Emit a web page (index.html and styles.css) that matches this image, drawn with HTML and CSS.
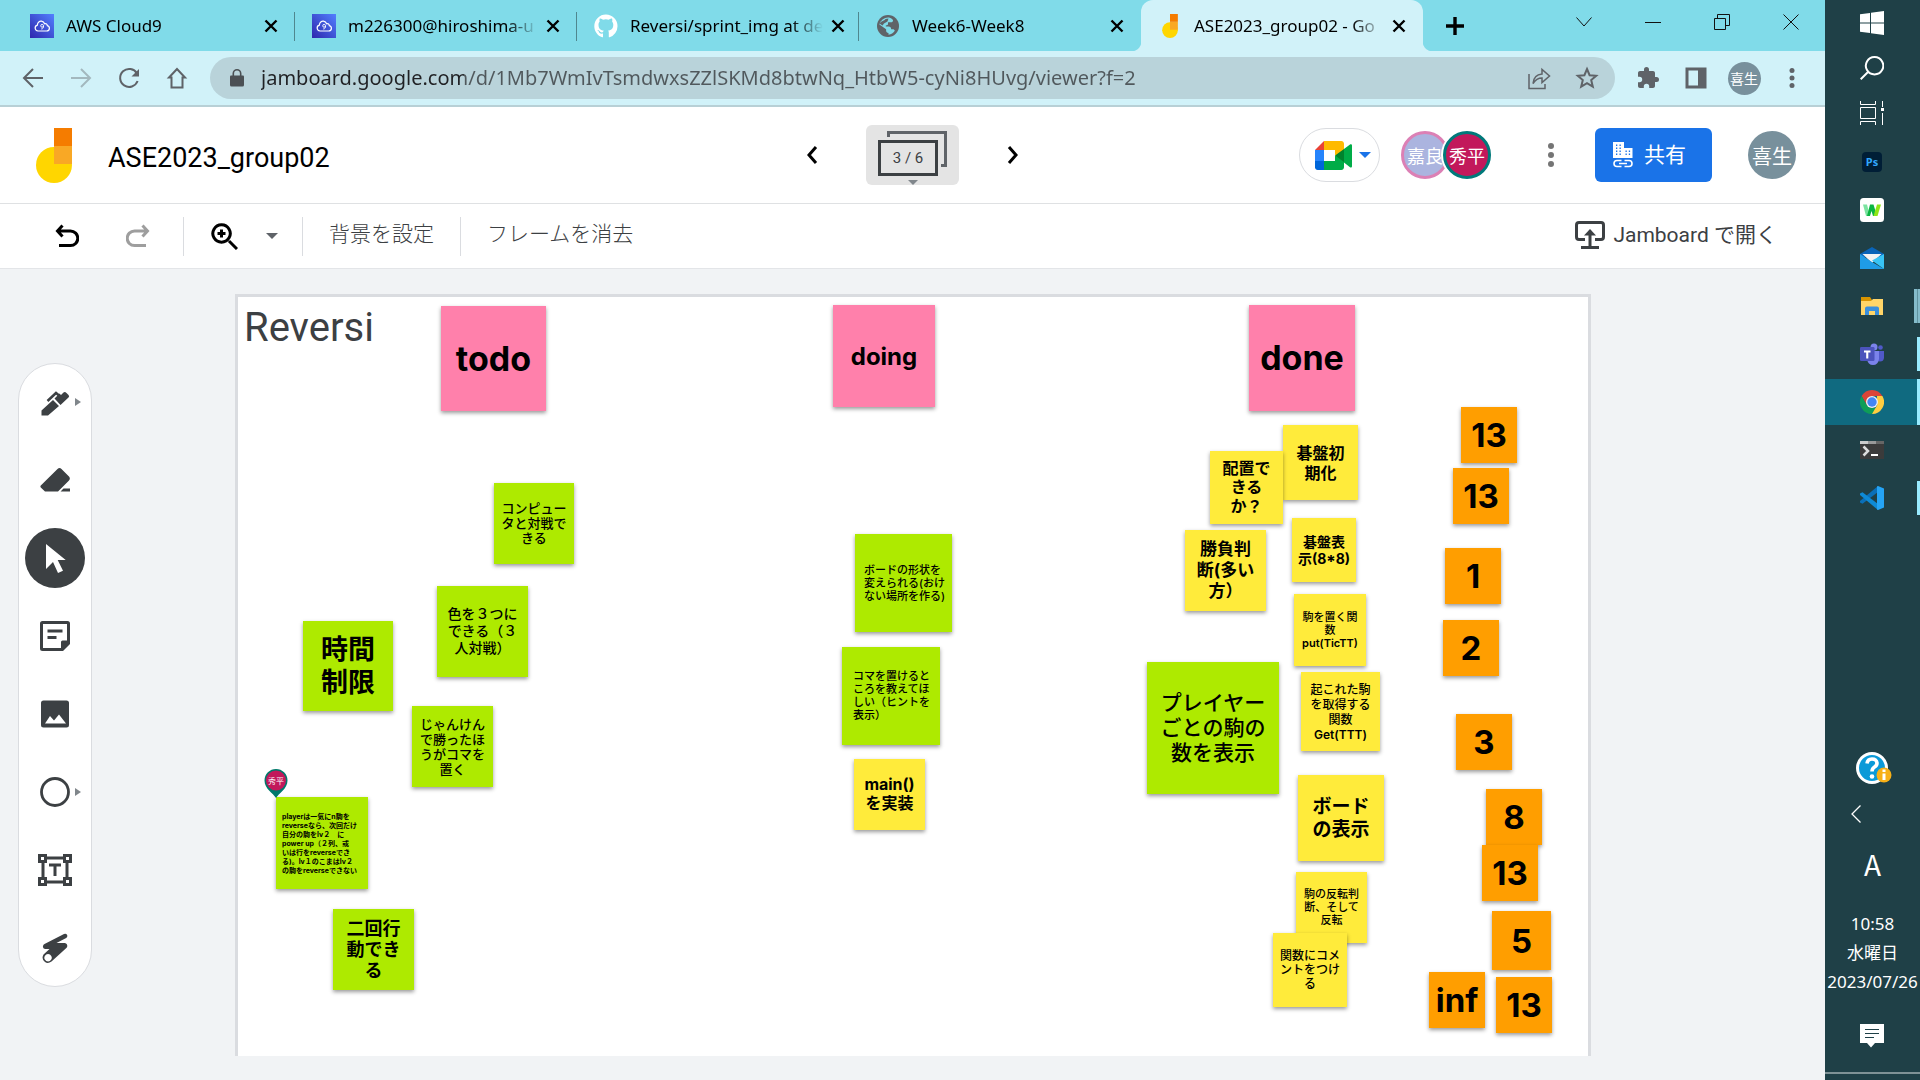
FILE: index.html
```html
<!DOCTYPE html>
<html lang="ja">
<head>
<meta charset="utf-8">
<title>ASE2023_group02 - Google Jamboard</title>
<link rel="stylesheet" href="styles.css">
</head>
<body>
<svg class="defs" aria-hidden="true">
  <defs>
    <linearGradient id="aws" x1="0" y1="1" x2="1" y2="0"><stop offset="0" stop-color="#2e27ad"/><stop offset="1" stop-color="#527fff"/></linearGradient>
    <symbol id="cloud9" viewBox="0 0 24 24"><path fill="url(#aws)" d="M0 0h24v24H0z"/><path fill="none" stroke="#fff" stroke-width="1.2" d="M8 17a3 3 0 0 1-.6-5.900C7.500 8 9.600 7 11.500 7.200c1.800.2 2.700 1.300 3.100 2.500 1.600-.5 2.700.6 2.700 1.900 1.600.4 2.200 1.500 2.100 2.800-.1 1.500-1.300 2.600-2.700 2.600z"/><path fill="none" stroke="#fff" stroke-width=".9" d="M13.500 11.800a1.400 1.400 0 1 1-2.800 0 1.400 1.400 0 0 1 2.800 0c0 2-.3 3.100-2.300 3.200"/></symbol>
    <symbol id="x" viewBox="0 0 14 14"><path fill="none" stroke="#000" stroke-width="2.400" d="M1.500 1.500l11 11M12.500 1.500l-11 11"/></symbol>
    <symbol id="jam" viewBox="0 0 36 55"><path fill="#f57c00" d="M18 0h18v18H18z"/><circle cx="18" cy="37" r="18" fill="#ffd600"/><path fill="#f9a825" d="M18 18h18v18H18z"/></symbol>
    <symbol id="dots" viewBox="0 0 6 24"><circle cx="3" cy="3" r="3"/><circle cx="3" cy="12" r="3"/><circle cx="3" cy="21" r="3"/></symbol>
  </defs>
</svg>
<div class="desktop">
  <div class="browser">
    <div class="tabs">
      <div class="tab"><svg class="fav"><use href="#cloud9"/></svg><span class="tab-title">AWS Cloud9</span><button class="tab-close" aria-label="閉じる"><svg><use href="#x"/></svg></button></div>
      <div class="tab"><svg class="fav"><use href="#cloud9"/></svg><span class="tab-title">m226300@hiroshima-u</span><button class="tab-close" aria-label="閉じる"><svg><use href="#x"/></svg></button></div>
      <div class="tab"><svg class="fav" viewBox="0 0 24 24"><path fill="#fff" d="M12 .5A11.600 11.600 0 0 0 .3 12.200c0 5.100 3.300 9.500 7.900 11.100.6.1.8-.3.800-.6v-3.100c-3.200.7-3.900-1.300-3.900-1.300-.6-1.400-1.300-1.700-1.300-1.700-1-.7.1-.7.1-.7 1.200.1 1.800 1.200 1.800 1.200 1 1.800 2.700 1.300 3.400 1 .1-.8.400-1.300.7-1.600-2.600-.3-5.300-1.300-5.300-5.800 0-1.300.5-2.300 1.200-3.100-.1-.3-.5-1.500.1-3.100 0 0 1-.3 3.200 1.200a11 11 0 0 1 5.800 0c2.200-1.500 3.200-1.200 3.200-1.200.6 1.600.2 2.800.1 3.100.8.800 1.200 1.900 1.200 3.100 0 4.500-2.700 5.500-5.300 5.800.4.4.8 1.100.8 2.200v4c0 .3.200.7.800.6a11.700 11.700 0 0 0 7.900-11.100A11.600 11.600 0 0 0 12 .5z"/></svg><span class="tab-title">Reversi/sprint_img at de</span><button class="tab-close" aria-label="閉じる"><svg><use href="#x"/></svg></button></div>
      <div class="tab last"><svg class="fav" viewBox="0 0 24 24"><circle cx="12" cy="12" r="11" fill="#5f6368"/><path fill="#80dbe9" d="M13 3.500C15 4 16 4.700 17 6c.2 1.500-.8 2.300-2 2.300h-3v1.800c0 1-1 1.300-2.200 1.300v1.200h2.700c1.800 0 2.700 1 2.700 2.700h1.600c1.100 0 1.800.6 2 1.500A8.700 8.700 0 0 1 12.500 20.700V19c-1.500-.2-2.400-1-2.400-2.500v-1.200L3.400 10.500A8.800 8.800 0 0 1 13 3.500z"/><path fill="#5f6368" d="M3.500 9.500C6 6.500 8 7 9.500 5l3-.5-1 3-3.500 2-1.500 2z"/></svg><span class="tab-title">Week6-Week8</span><button class="tab-close" aria-label="閉じる"><svg><use href="#x"/></svg></button></div>
      <div class="tab active"><svg class="fav"><use href="#jam"/></svg><span class="tab-title">ASE2023_group02 - Go</span><button class="tab-close" aria-label="閉じる"><svg><use href="#x"/></svg></button></div>
      <button class="new-tab" aria-label="新しいタブ"><svg viewBox="0 0 18 18"><path stroke="#000" stroke-width="3.400" d="M9 0v18M0 9h18"/></svg></button>
      <div class="window-buttons">
        <button aria-label="タブを検索"><svg viewBox="0 0 16 16"><path d="M.5 3.500L8 12l7.500-8.500"/></svg></button>
        <button aria-label="最小化"><svg viewBox="0 0 16 16"><path d="M0 8.500h16"/></svg></button>
        <button aria-label="元に戻す"><svg viewBox="0 0 16 16"><path d="M.5 4.500h11v11H.5zM3.500 4.500v-4h12v11h-4"/></svg></button>
        <button aria-label="閉じる"><svg viewBox="0 0 16 16"><path d="M.5.5l15 15M15.500.5l-15 15"/></svg></button>
      </div>
    </div>

    <div class="navbar">
      <button class="nav" aria-label="戻る"><svg viewBox="0 0 24 24"><path d="M22 12H3M12 3l-9 9 9 9"/></svg></button>
      <button class="nav faded" aria-label="進む"><svg viewBox="0 0 24 24"><path d="M2 12h19M12 3l9 9-9 9"/></svg></button>
      <button class="nav" aria-label="再読み込み"><svg viewBox="0 0 24 24"><path d="M20 7.500A9 9 0 1 0 20.600 15"/><path d="M14.500 10.500H22V3z" fill="#5f6368" stroke="none"/></svg></button>
      <button class="nav" aria-label="ホーム"><svg viewBox="0 0 24 24"><path d="M12 3L4 11.500h2.500V21.500h11V11.500H20z"/></svg></button>
      <div class="omnibox">
        <svg class="lock" viewBox="0 0 14 18"><path fill="#4b5054" d="M1 6.500h12q1 0 1 1V16q0 1.500-1.500 1.500h-11Q0 17.500 0 16V7.500q0-1 1-1z"/><path fill="none" stroke="#4b5054" stroke-width="1.600" d="M3.300 7V4.500a3.700 3.700 0 0 1 7.400 0V7"/></svg>
        <label class="url"><input type="text" aria-label="アドレス" value="jamboard.google.com/d/1Mb7WmIvTsmdwxsZZlSKMd8btwNq_HtbW5-cyNi8HUvg/viewer?f=2"></label>
        <button class="nav" aria-label="共有"><svg viewBox="0 0 24 24"><path class="thin" d="M2 8v14.500h16V18M6 17.500c.5-6 3.500-9 9-9.500V3.500l7.500 6.500-7.500 6.500V12c-4 0-6.500 1.500-9 5.500z"/></svg></button>
        <button class="nav" aria-label="ブックマーク"><svg viewBox="0 0 24 24"><path d="M12 3l2.600 6.200 6.600.5-5 4.300 1.600 6.600-5.800-3.500-5.800 3.500L7.800 14l-5-4.300 6.600-.5z"/></svg></button>
      </div>
      <button class="nav ext" aria-label="拡張機能"><svg viewBox="0 0 24 24"><path class="solid" d="M20.500 11H19V7c0-1.100-.9-2-2-2h-4V3.500a2.500 2.500 0 0 0-5 0V5H4c-1.100 0-2 .9-2 2v3.800h1.500a2.700 2.700 0 0 1 0 5.400H2V20c0 1.100.9 2 2 2h3.800v-1.500a2.700 2.700 0 0 1 5.400 0V22H17c1.100 0 2-.9 2-2v-4h1.500a2.500 2.500 0 0 0 0-5z"/></svg></button>
      <button class="nav" aria-label="サイドパネル"><svg viewBox="0 0 24 24"><path class="solid" fill-rule="evenodd" d="M1.500 1.500h21v21h-21zM4.500 4.500v15H14v-15z"/></svg></button>
      <button class="nav profile"><span>喜生</span></button>
      <button class="nav" aria-label="メニュー"><svg class="kebab-s"><use href="#dots"/></svg></button>
    </div>

    <header class="app-header">
      <div class="brand">
        <svg class="logo"><use href="#jam"/></svg>
        <h1>ASE2023_group02</h1>
      </div>
      <div class="frames">
        <button class="step" aria-label="前のフレーム"><svg viewBox="0 0 12 18"><path d="M10 1L3 9l7 8"/></svg></button>
        <button class="frame-count"><span class="frame-back"></span><span class="frame-front">3 / 6</span><span class="frame-caret"></span></button>
        <button class="step" aria-label="次のフレーム"><svg viewBox="0 0 12 18"><path d="M2 1l7 8-7 8"/></svg></button>
      </div>
      <div class="actions">
        <button class="meet" aria-label="Meet"><svg class="meet-icon" viewBox="0 0 37 29"><path fill="#00832d" d="M20 14.500l4 4.500 5 3.300 1-7.800-1-7.500-5 3z"/><path fill="#0066da" d="M0 20v6.300C0 27.800 1.200 29 2.700 29H9l1.500-4.500L9 20l-4.500-1.500z"/><path fill="#e94235" d="M9 0L0 9l4.500 1.500L9 9l1.500-4z"/><path fill="#2684fc" d="M0 9h9v11H0z"/><path fill="#00ac47" d="M35 3.500L29 8v13.500l6 4.800c1 .7 2 0 2-1V4.500c0-1.200-1.200-1.800-2-1zM20 14.500V20H9v9h17.300c1.500 0 2.700-1.200 2.700-2.700V21z"/><path fill="#ffba00" d="M26.300 0H9v9h11v5.500L29 8V2.700C29 1.200 27.800 0 26.300 0z"/></svg><span class="caret blue"></span></button>
        <div class="people"><span class="person p1">嘉良</span><span class="person p2">秀平</span></div>
        <button class="more" aria-label="その他の操作"><svg><use href="#dots"/></svg></button>
        <button class="share"><svg viewBox="0 0 20 26"><path fill="#fff" d="M0 0h11v6h8.500v10H0z"/><path fill="#1a73e8" d="M3 2.500h1.300v1.500H3zM6.500 2.500h1.300v1.500H6.500zM3 5.500h1.300V7H3zM6.500 5.500h1.300V7H6.500zM3 8.500h1.300V10H3zM6.500 8.500h1.300V10H6.500zM3 11.500h1.300V13H3zM6.500 11.500h1.300V13H6.500zM12.500 8.500h1.300V10h-1.300zM15.800 8.500h1.300V10h-1.300zM12.500 11.500h1.300V13h-1.300zM15.800 11.500h1.300V13h-1.300z"/><path fill="none" stroke="#fff" stroke-width="1.600" d="M8.500 18.500H4a3 3 0 0 0 0 6h4.500M11.500 18.500H16a3 3 0 0 1 0 6h-4.500M6 21.500h8"/></svg><span>共有</span></button>
        <button class="account">喜生</button>
      </div>
    </header>

    <div class="toolbar">
      <button class="tool-icon undo" aria-label="元に戻す"><svg viewBox="0 0 24 24"><path d="M7.500 1.500L2.500 7l5 5.500M3 7h12.500a7.300 7.300 0 0 1 0 14.600H4"/></svg></button>
      <button class="tool-icon redo" aria-label="やり直す"><svg viewBox="0 0 24 24"><path d="M16.500 1.500l5 5.500-5 5.500M21 7H8.500a7.300 7.300 0 0 0 0 14.600H20"/></svg></button>
      <button class="tool-icon zoom" aria-label="ズーム"><svg viewBox="0 0 27 27"><path d="M18 18l8 8M10.500 1.800a8.700 8.700 0 1 0 .1 0zM10.500 6.500v8M6.500 10.500h8"/></svg></button>
      <button class="tool-icon drop" aria-label="ズームの選択"><span class="caret"></span></button>
      <button class="tool-text">背景を設定</button>
      <button class="tool-text">フレームを消去</button>
      <button class="open"><svg viewBox="0 0 30 28"><path fill="none" stroke="#3c4043" stroke-width="3" d="M10 18.500H4q-2.500 0-2.500-2.500V4q0-2.500 2.500-2.500h22q2.500 0 2.500 2.500v12q0 2.500-2.500 2.500h-6"/><path fill="none" stroke="#3c4043" stroke-width="3" d="M15 25.500V12M6 26.500h18"/><path fill="#3c4043" d="M9 14.500l6-6.500 6 6.500z"/></svg>Jamboard で開く</button>
    </div>

    <main class="workspace">
      <div class="side">
        <div class="palette">
          <button class="more-opts" aria-label="ペン"><svg viewBox="0 0 30 30"><path d="M1.500 28.500v-5L13 13l6 6L8 28.500zM14.500 11.500l5-5L21 8l2.500-2.500q1.500-1 3 .5l2 2q1.300 1.300 0 2.600L20.500 18z"/><path fill="none" stroke="#3c4043" stroke-width="2.500" d="M7.500 14L16 6l3 2.500"/></svg></button>
          <button aria-label="消しゴム"><svg viewBox="0 0 30 30"><path d="M.8 20.500L17.500 4q2-1.800 4 0l7.500 7.500q1.700 2 0 4L18 26.500H5L.8 22.500q-.8-1 0-2zM20.500 26.500l3-3H30v3z"/></svg></button>
          <button class="selected" aria-label="選択"><svg viewBox="0 0 30 30"><path fill="#fff" d="M6 1v25l7-7 5 11 5-2.300-5.300-10.700h8z"/></svg></button>
          <button aria-label="付箋"><svg viewBox="0 0 30 30"><path fill-rule="evenodd" d="M2.500 0h25Q30 0 30 2.500V23l-7 7H2.500Q0 30 0 27.500v-25Q0 0 2.500 0zM3 3v24h18v-6q0-1.500 1.500-1.500H27V3z"/><path d="M7.500 8.500h15v3h-15zM7.500 15h9v3h-9z"/></svg></button>
          <button aria-label="画像"><svg viewBox="0 0 30 30"><path fill-rule="evenodd" d="M3.500 1.500h23q2.500 0 2.500 2.500v22q0 2.500-2.500 2.500h-23Q1 28.500 1 26V4q0-2.500 2.500-2.500zM5 24.500h21L19 15.500l-5 6-4-4.500z"/></svg></button>
          <button class="more-opts" aria-label="円"><svg viewBox="0 0 30 30"><circle cx="15" cy="15" r="13.500" fill="none" stroke="#3c4043" stroke-width="2.800"/></svg></button>
          <button aria-label="テキスト ボックス"><svg class="wide" viewBox="0 0 34 34"><path fill="none" stroke="#3c4043" stroke-width="3" d="M1.500 2.500h6v6h-6zM26.500 2.500h6v6h-6zM1.500 25.500h6v6h-6zM26.500 25.500h6v6h-6zM8 5h18M8 29h18M5 8v18M29 8v18M11 12h12M17 12v11"/></svg></button>
          <button aria-label="レーザー"><svg viewBox="0 0 30 30"><path fill-rule="evenodd" d="M4.500 11L24 1q2-.8 3 .7 1 2-.8 3.200L16.500 10H25q2.500.5 2.300 3.200-.2 1.300-1.500 2.200L11.500 28.500Q8 31 5 29q-4-3-1.500-7.500L9.500 16H5q-2.500-.5-2-3 .3-1.400 1.500-2zM8 21a3.700 3.700 0 1 0 .1 0z"/></svg></button>
        </div>
      </div>
      <section class="board">
        <div class="board-title">Reversi</div>
        <div class="note pink n-todo">todo</div>
        <div class="note pink n-doing">doing</div>
        <div class="note pink n-done">done</div>

        <div class="note green n-computer">コンピュー<br>タと対戦で<br>きる</div>
        <div class="note green n-color">色を３つに<br>できる（３<br>人対戦）</div>
        <div class="note green n-time">時間<br>制限</div>
        <div class="note green n-janken">じゃんけん<br>で勝ったほ<br>うがコマを<br>置く</div>
        <div class="note green left n-levelup">playerは一気にn駒を<br>reverseなら、次回だけ<br>自分の駒をlv２　に<br>power up（２列、或<br>いは行をreverseでき<br>る)。lv１のこまはlv２<br>の駒をreverseできない</div>
        <div class="pin"><svg viewBox="0 0 24 29"><path fill="#00796b" d="M12 29C9 24 .5 20 .5 11.500a11.500 11.500 0 0 1 23 0C23.500 20 15 24 12 29z"/><circle cx="12" cy="11.500" r="10" fill="#c2185b"/></svg><span>秀平</span></div>
        <div class="note green n-twice">二回行<br>動でき<br>る</div>

        <div class="note green left n-shape">ボードの形状を<br>変えられる(おけ<br>ない場所を作る)</div>
        <div class="note green left n-hint">コマを置けると<br>ころを教えてほ<br>しい（ヒントを<br>表示）</div>
        <div class="note yellow n-main">main()<br>を実装</div>

        <div class="note yellow n-init">碁盤初<br>期化</div>
        <div class="note yellow n-place">配置で<br>きる<br>か？</div>
        <div class="note yellow n-win">勝負判<br>断(多い<br>方）</div>
        <div class="note yellow n-show">碁盤表<br>示(8*8)</div>
        <div class="note yellow n-put"><div>駒を置く関<br>数<br><b>put(TicTT)</b></div></div>
        <div class="note green n-count">プレイヤー<br>ごとの駒の<br>数を表示</div>
        <div class="note yellow n-get"><div>起これた駒<br>を取得する<br>関数<br><b>Get(TTT)</b></div></div>
        <div class="note yellow n-view">ボード<br>の表示</div>
        <div class="note yellow n-flip">駒の反転判<br>断、そして<br>反転</div>
        <div class="note yellow n-comment">関数にコメ<br>ントをつけ<br>る</div>

        <div class="note orange o-1">13</div>
        <div class="note orange o-2">13</div>
        <div class="note orange o-3">1</div>
        <div class="note orange o-4">2</div>
        <div class="note orange o-5">3</div>
        <div class="note orange o-6">8</div>
        <div class="note orange o-7">13</div>
        <div class="note orange o-8">5</div>
        <div class="note orange o-9">inf</div>
        <div class="note orange o-10">13</div>
      </section>
    </main>
  </div>

  <aside class="taskbar">
    <button class="sys" aria-label="スタート"><svg viewBox="0 0 24 24"><path fill="#fff" d="M0 3.300L10 2v9.500H0zM11 1.800L24 0v11.500H11zM0 12.500h10V22L0 20.700zM11 12.500h13V24l-13-1.800z"/></svg></button>
    <button class="sys" aria-label="検索"><svg viewBox="0 0 24 24"><path fill="none" stroke="#fff" stroke-width="2" d="M14.500 1a8.700 8.700 0 1 0 .1 0zM8.500 15.500L.7 23.300"/></svg></button>
    <button class="sys" aria-label="タスク ビュー"><svg viewBox="0 0 24 24"><path fill="none" stroke="#fff" d="M.5 0v3.500h15V0M.5 6.500h15v11H.5zM.5 24v-3.500h15V24M22.500 0v6M22.500 12v12"/><path fill="#fff" d="M21 7h3v3h-3z"/></svg></button>
    <div class="apps">
      <button class="app" aria-label="Photoshop"><span class="ps">Ps</span></button>
      <button class="app" aria-label="WebStorm"><svg viewBox="0 0 24 24"><rect width="24" height="24" rx="3.500" fill="#fff"/><path fill="#7be3a0" d="M3 6.500h4L10 18H6z"/><path fill="#0ab542" d="M7 18l3-11.500h3.500L17 18h-4l-1.500-5L10 18z"/><path fill="#8ee617" d="M13.500 18L17 6.500h4L17.500 18z"/></svg></button>
      <button class="app" aria-label="メール"><svg viewBox="0 0 24 24"><path fill="#0a64b8" d="M0 8l12-7 12 7v3H0z"/><path fill="#f3f3f3" d="M2.500 8h19L12 17z"/><path fill="#1f9ce6" d="M0 8l12 8L24 23H0z"/><path fill="#38c4f5" d="M24 8v15L12 14.500z"/></svg></button>
      <button class="app" aria-label="エクスプローラー"><svg viewBox="0 0 24 24"><path fill="#d89400" d="M1 3h9l2 3v3H1z"/><path fill="#ffd568" d="M1 7h10l2-2h10v16H1z"/><path fill="#3a8fdc" d="M7 12.500h10q2 0 2 2V21h-4v-4H9v4H5v-6.500q0-2 2-2z"/></svg><span class="mark double"></span></button>
      <button class="app" aria-label="Teams"><svg viewBox="0 0 24 24"><circle cx="14" cy="5" r="3.500" fill="#7b83eb"/><circle cx="20.500" cy="5.500" r="2.300" fill="#5059c9"/><path fill="#5059c9" d="M16 9h8v7q-.5 3.500-4 3.500T16 16z"/><path fill="#7b83eb" d="M7 9h12v8q-1 6-6 6t-6-6z"/><rect y="5" width="14.500" height="14" rx="1.200" fill="#4b53bc"/><path fill="#fff" d="M4 8.500h6.500v2H8.300v6H6.200v-6H4z"/></svg><span class="mark"></span></button>
      <button class="app current" aria-label="Chrome"><svg viewBox="0 0 24 24"><path fill="#db4437" d="M12 0a12 12 0 0 1 10.400 6H12L6.800 15 1.600 6A12 12 0 0 1 12 0z"/><path fill="#0f9d58" d="M1.600 6l5.200 9L12 18h5.200L12 24A12 12 0 0 1 1.600 6z"/><path fill="#ffcd40" d="M22.400 6A12 12 0 0 1 12 24l5.200-9L17 6z"/><circle cx="12" cy="12" r="6" fill="#f1f1f1"/><circle cx="12" cy="12" r="4.700" fill="#4285f4"/></svg><span class="mark"></span></button>
      <button class="app" aria-label="ターミナル"><svg viewBox="0 0 24 24"><path fill="#3b3b3b" d="M0 3h24v18H0z"/><path fill="#ccc" d="M0 3h8v3H0z"/><path fill="#999" d="M8 3h8v3H8z"/><path fill="#666" d="M16 3h8v3h-8z"/><path fill="none" stroke="#ddd" stroke-width="2.500" d="M3.500 8.500L8 13l-4.500 4.500"/><path fill="#fff" d="M11 16h7v2h-7z"/></svg></button>
      <button class="app" aria-label="Visual Studio Code"><svg viewBox="0 0 24 24"><path fill="#0a6fb8" d="M0 16.500V15L18 0v6L2.500 17.800z"/><path fill="#0e8ad6" d="M0 7.500L2.500 6.200 18 18v6L0 9z"/><path fill="#25a4f5" d="M18 0l6 2.500v19L18 24l-1-.5V.5z"/></svg><span class="mark"></span></button>
    </div>
    <div class="tray">
      <button class="help" aria-label="ヘルプ"><svg viewBox="0 0 36 32"><circle cx="16" cy="16" r="14.500" fill="#0b9ad8" stroke="#fff" stroke-width="3"/><path fill="none" stroke="#fff" stroke-width="3.600" d="M11 11.500q.5-4.500 5-4.500t5 4q0 2.500-2.500 4T16 19.500"/><circle cx="16" cy="24.500" r="2.300" fill="#fff"/><circle cx="28" cy="23" r="7.500" fill="#f7b017"/><path fill="#fff" d="M26.500 21.500h3V28h-3zM26.500 17.500h3V20h-3z"/></svg></button>
      <button class="expand" aria-label="隠れているインジケーター"><svg viewBox="0 0 10 18"><path fill="none" stroke="#fff" stroke-width="1.300" d="M9.500.5L1 9l8.500 8.500"/></svg></button>
      <button class="ime">A</button>
      <div class="clock"><time>10:58</time><span>水曜日</span><time>2023/07/26</time></div>
      <button class="notify" aria-label="通知"><svg viewBox="0 0 24 24"><path fill="#fff" d="M0 0h24v19h-9l-4 4.500L7 19H0z"/><path stroke="#1f4047" d="M5 5.500h14M5 9.500h14M5 13.500h9"/></svg></button>
    </div>
  </aside>
</div>
</body>
</html>
```
FILE: styles.css
```css
* { box-sizing: border-box; }

body {
  margin: 0;
  font-family: "Noto Sans", "Noto Sans CJK JP", sans-serif;
  color: #000;
}

button {
  display: flex;
  align-items: center;
  justify-content: center;
  padding: 0;
  border: 0;
  background: none;
  color: inherit;
  font: inherit;
}

svg { display: block; flex: none; }
.defs { position: absolute; width: 0; height: 0; }

.desktop {
  display: grid;
  grid-template-columns: minmax(0, 1fr) 95px;
  min-height: 100vh;
}

.browser { display: flex; flex-direction: column; background: #fff; }

/* Tab strip */
.tabs {
  display: flex;
  height: 51px;
  padding-left: 13px;
  background: #80dbe9;
}

.tab {
  position: relative;
  display: flex;
  align-items: center;
  flex: 0 1 282px;
  min-width: 0;
  padding: 0 17px;
}

.tab::after {
  content: "";
  position: absolute;
  right: 0;
  top: 12px;
  width: 1px;
  height: 29px;
  background: #4f878f;
}

.tab.last::after { display: none; }
.tab.active { border-radius: 12px 12px 0 0; background: #d1f2f9; }

.tab.active::before,
.tab.active::after {
  content: "";
  position: absolute;
  top: auto;
  bottom: 0;
  width: 10px;
  height: 10px;
}

.tab.active::before { left: -10px; background: radial-gradient(circle at 0 0, #80dbe9 10px, #d1f2f9 11px); }
.tab.active::after { right: -10px; background: radial-gradient(circle at 100% 0, #80dbe9 10px, #d1f2f9 11px); }

.fav { width: 24px; height: 24px; }

.tab-title {
  flex: 1;
  margin: 0 8px 0 12px;
  font-size: 17px;
  line-height: 26px;
  white-space: nowrap;
  mask-image: linear-gradient(to right, #000 calc(100% - 32px), transparent);
}

.tab-close svg { width: 14px; height: 14px; }
.new-tab { width: 64px; }
.new-tab svg { width: 18px; height: 18px; }
.window-buttons { display: flex; height: 43px; margin-left: auto; }
.window-buttons button { width: 69px; }
.window-buttons svg { width: 16px; height: 16px; fill: none; stroke: #111; }

/* Address bar */
.navbar {
  display: flex;
  align-items: center;
  height: 56px;
  padding: 0 9px;
  border-bottom: 2px solid #b8d0d6;
  background: #d1f2f9;
}

.nav { width: 48px; height: 42px; flex: none; }
.nav svg { width: 24px; height: 24px; fill: none; stroke: #5f6368; stroke-width: 2; }
.nav .thin { stroke-width: 1.500; }
.nav .solid { fill: #5f6368; stroke: none; }
.nav.faded { opacity: .4; }
.nav .kebab-s { width: 6px; height: 20px; fill: #5f6368; stroke: none; }
.ext { margin-left: 9px; }

.omnibox {
  display: flex;
  align-items: center;
  flex: 1;
  height: 42px;
  margin-left: 9px;
  padding: 0 4px 0 20px;
  border-radius: 21px;
  background: #b9d3da;
}

.lock { width: 14px; height: 18px; }
.url { flex: 1; margin-left: 17px; }

.url input {
  width: 100%;
  padding: 0;
  border: 0;
  outline: 0;
  background: linear-gradient(to right, #202124 203px, #50585c 203px);
  background-clip: text;
  color: transparent;
  font-family: inherit;
  font-size: 20px;
  line-height: 28px;
}

.profile span {
  display: flex;
  align-items: center;
  justify-content: center;
  width: 33px;
  height: 33px;
  border-radius: 50%;
  background: #78909c;
  color: #fff;
  font-size: 14px;
}

/* Jamboard header */
.app-header {
  display: grid;
  grid-template-columns: 1fr auto 1fr;
  align-items: center;
  height: 97px;
  padding: 0 29px;
  border-bottom: 1px solid #dfe1e3;
}

.brand { display: flex; align-items: center; gap: 36px; padding-left: 7px; }
.logo { width: 36px; height: 55px; }

h1 {
  margin: 6px 0 0;
  font: 400 27px/32px Roboto, sans-serif;
}

.frames { display: flex; align-items: center; gap: 24px; }
.step { width: 60px; height: 60px; }
.step svg { width: 12px; height: 18px; fill: none; stroke: #000; stroke-width: 3; }

.frame-count {
  position: relative;
  width: 93px;
  height: 60px;
  border-radius: 6px;
  background: #e4e4e4;
}

.frame-back {
  position: absolute;
  left: 21px;
  top: 6px;
  width: 60px;
  height: 36px;
  border: 3px solid #5f6368;
  clip-path: polygon(0 0, 100% 0, 100% 100%, 54px 100%, 54px 6px, 0 6px);
}

.frame-front {
  position: absolute;
  left: 12px;
  top: 15px;
  width: 60px;
  height: 36px;
  border: 3px solid #3c4043;
  background: #e4e4e4;
  color: #3c4043;
  font: 400 15px/30px Roboto, sans-serif;
}

.caret, .frame-caret {
  width: 0;
  height: 0;
  border: 6px solid transparent;
  border-top-color: #5f6368;
  border-bottom: 0;
}

.frame-caret { position: absolute; left: 42px; top: 55px; border-width: 5px 5px 0; border-top-color: #80868b; }
.caret.blue { border-top-color: #1a73e8; }
.actions { display: flex; align-items: center; justify-content: flex-end; }

.meet {
  gap: 7px;
  width: 81px;
  height: 54px;
  padding-left: 6px;
  border: 1px solid #dadce0;
  border-radius: 27px;
}

.meet-icon { width: 37px; height: 29px; }
.people { display: flex; margin-left: 21px; }

.person, .account {
  display: flex;
  align-items: center;
  justify-content: center;
  width: 48px;
  height: 48px;
  border-radius: 50%;
  color: #fff;
  font-size: 18px;
}

.p1 { border: 3px solid #dc80b5; background: #abb4df; }
.p2 { margin-left: -6px; border: 3px solid #00797a; background: #c2185b; box-shadow: 0 0 0 2px #fff; }
.more { width: 60px; height: 48px; margin-left: 30px; }
.more svg { width: 6px; height: 24px; fill: #757575; }

.share {
  gap: 11px;
  width: 117px;
  height: 54px;
  margin-left: 14px;
  padding-right: 8px;
  border-radius: 6px;
  background: #1a73e8;
  color: #fff;
  font: 400 21px/28px "Noto Sans CJK JP", sans-serif;
}

.share svg { width: 20px; height: 26px; }
.share span { padding-bottom: 4px; }
.account { margin-left: 36px; background: #78909c; font-size: 20px; }

/* Toolbar under the header */
.toolbar {
  display: flex;
  align-items: center;
  height: 65px;
  padding: 0 48px 0 31px;
  border-bottom: 1px solid #e3e5e8;
  color: #3c4043;
  font: 400 21px/30px Roboto, "Noto Sans CJK JP", sans-serif;
}

.tool-icon { width: 72px; height: 39px; }
.tool-icon svg { width: 24px; height: 24px; fill: none; stroke: #000; stroke-width: 3; }
.redo { width: 70px; }
.redo svg { stroke: #9e9e9e; }
.zoom { width: 82px; margin-left: 10px; border-left: 1px solid #dadce0; }
.zoom svg { width: 27px; height: 27px; }
.drop { width: 37px; justify-content: flex-start; padding-left: 1px; }

.tool-text {
  height: 39px;
  padding: 0 26px 5px;
  border-left: 1px solid #dadce0;
  font-weight: 300;
}

.open { gap: 8px; margin-left: auto; padding-bottom: 3px; }
.open svg { width: 30px; height: 28px; }

/* Workspace */
.workspace {
  display: grid;
  grid-template-columns: 235px minmax(0, 1fr) 234px;
  flex: 1;
  padding: 25px 0 24px;
  background: #f1f3f5;
}

.side { display: flex; align-items: center; padding: 0 0 0 18px; }

.palette {
  display: flex;
  flex-direction: column;
  gap: 18px;
  width: 74px;
  padding: 8px 6px;
  border: 1px solid #dadce0;
  border-radius: 37px;
  background: #fff;
}

.palette button { position: relative; width: 60px; height: 60px; border-radius: 50%; }
.palette svg { width: 30px; height: 30px; fill: #3c4043; }
.palette svg.wide { width: 34px; height: 34px; }
.palette .selected { background: #3c4043; }

.more-opts::after {
  content: "";
  position: absolute;
  right: 4px;
  top: 26px;
  border: 4px solid transparent;
  border-left: 6px solid #80868b;
  border-right: 0;
}

.board {
  position: relative;
  min-height: 762px;
  border: 3px solid #dadce0;
  border-bottom: 0;
  background: #fff;
}

.board-title {
  padding: 7px 6px;
  color: #3c4043;
  font: 400 40px/48px Roboto, sans-serif;
}

.note {
  position: absolute;
  display: flex;
  align-items: center;
  justify-content: center;
  box-shadow: 0 2px 4px rgba(0, 0, 0, .4);
  font-family: Inter, "Noto Sans CJK JP", sans-serif;
  font-weight: 700;
  text-align: center;
  white-space: nowrap;
}

.note b { font-weight: 600; }
.pink { background: #ff80ab; }
.green { background: #aeea00; }
.yellow { background: #ffeb3b; }
.orange { width: 56px; height: 56px; background: #ff9e00; font-size: 33px; }
.left { justify-content: flex-start; text-align: left; }

.n-todo { left: 203px; top: 9px; width: 105px; height: 105px; font-size: 34px; line-height: 40px; }
.n-doing { left: 595px; top: 8px; width: 102px; height: 102px; font-size: 24px; }
.n-done { left: 1011px; top: 8px; width: 106px; height: 106px; font-size: 34px; line-height: 40px; }

.n-computer { left: 256px; top: 186px; width: 80px; height: 81px; font-size: 13px; line-height: 15px; font-weight: 500; }
.n-color { left: 199px; top: 289px; width: 91px; height: 91px; padding-bottom: 2px; font-size: 14px; line-height: 17px; font-weight: 500; }
.n-time { left: 65px; top: 324px; width: 90px; height: 90px; font-size: 27px; line-height: 33px; }
.n-janken { left: 174px; top: 409px; width: 81px; height: 81px; font-size: 13px; line-height: 15px; font-weight: 500; }
.n-levelup { left: 38px; top: 500px; width: 92px; height: 92px; padding-left: 6px; font-size: 7px; line-height: 9px; font-weight: 700; }
.n-twice { left: 95px; top: 612px; width: 81px; height: 81px; font-size: 18px; line-height: 21px; }

.n-shape { left: 617px; top: 237px; width: 97px; height: 98px; padding-left: 9px; font-size: 11px; line-height: 13px; font-weight: 500; }
.n-hint { left: 604px; top: 350px; width: 98px; height: 98px; padding-left: 11px; font-size: 11px; line-height: 13px; font-weight: 500; }
.n-main { left: 616px; top: 462px; width: 71px; height: 71px; padding-bottom: 2px; font-size: 16px; line-height: 19px; }

.n-init { left: 1045px; top: 128px; width: 75px; height: 75px; font-size: 16px; line-height: 20px; }
.n-place { left: 972px; top: 154px; width: 73px; height: 73px; font-size: 16px; line-height: 19px; }
.n-win { left: 947px; top: 233px; width: 81px; height: 81px; font-size: 17px; line-height: 21px; }
.n-show { left: 1054px; top: 221px; width: 64px; height: 64px; font-size: 14px; line-height: 17px; }
.n-put { left: 1056px; top: 297px; width: 72px; height: 72px; font-size: 11px; line-height: 13px; font-weight: 500; }
.n-count { left: 909px; top: 365px; width: 132px; height: 132px; padding-bottom: 2px; font-size: 21px; line-height: 25px; font-weight: 500; }
.n-get { left: 1063px; top: 375px; width: 79px; height: 79px; font-size: 12px; line-height: 15px; font-weight: 500; }
.n-view { left: 1060px; top: 478px; width: 86px; height: 86px; font-size: 19px; line-height: 23px; }
.n-flip { left: 1058px; top: 575px; width: 71px; height: 71px; font-size: 11px; line-height: 13px; font-weight: 500; }
.n-comment { left: 1035px; top: 636px; width: 74px; height: 74px; font-size: 12px; line-height: 14px; font-weight: 500; }

.o-1 { left: 1223px; top: 110px; }
.o-2 { left: 1215px; top: 171px; }
.o-3 { left: 1207px; top: 251px; }
.o-4 { left: 1205px; top: 323px; }
.o-5 { left: 1218px; top: 417px; }
.o-6 { left: 1248px; top: 492px; }
.o-7 { left: 1244px; top: 548px; }
.o-8 { left: 1254px; top: 614px; width: 59px; height: 59px; }
.o-9 { left: 1191px; top: 675px; }
.o-10 { left: 1258px; top: 680px; }

.pin { position: absolute; left: 26px; top: 472px; width: 24px; height: 29px; }
.pin svg { width: 24px; height: 29px; }

.pin span {
  position: absolute;
  inset: 0;
  color: #fff;
  font-size: 8px;
  line-height: 23px;
  text-align: center;
}

/* Windows taskbar */
.taskbar {
  display: flex;
  flex-direction: column;
  padding-bottom: 6px;
  background: #1f4047;
  color: #fff;
}

.taskbar svg { width: 24px; height: 24px; }
.sys { height: 45px; padding-right: 1px; }
.apps { display: flex; flex-direction: column; gap: 2px; margin-top: 4px; }
.app { position: relative; height: 46px; padding-right: 1px; }
.app.current { background: #106a80; }

.ps {
  width: 20px;
  height: 20px;
  border-radius: 4px;
  background: #001e36;
  color: #31a8ff;
  font-size: 11px;
  font-weight: 700;
  line-height: 19px;
}

.mark { position: absolute; right: 0; top: 6px; width: 3px; height: 34px; background: #99ebff; }
.mark.double { width: 6px; border-right: 2px solid #85bccb; border-left: 3px solid #85bccb; background: #5f929f; }
.app.current .mark { top: 0; height: 46px; }

.tray { display: flex; flex-direction: column; margin-top: auto; border-bottom: 2px solid #7f9296; }
.tray .help { height: 60px; padding-left: 2px; }
.tray .help svg { width: 36px; height: 32px; }
.expand { height: 32px; padding-right: 34px; }
.tray .expand svg { width: 10px; height: 18px; }
.ime { height: 68px; font: 400 28px/38px "Noto Sans CJK JP", sans-serif; }
.clock { display: flex; flex-direction: column; align-items: center; padding: 11px 0 0; font-size: 17px; line-height: 29px; }
.notify { height: 76px; padding: 3px 2px 0 0; }
```
